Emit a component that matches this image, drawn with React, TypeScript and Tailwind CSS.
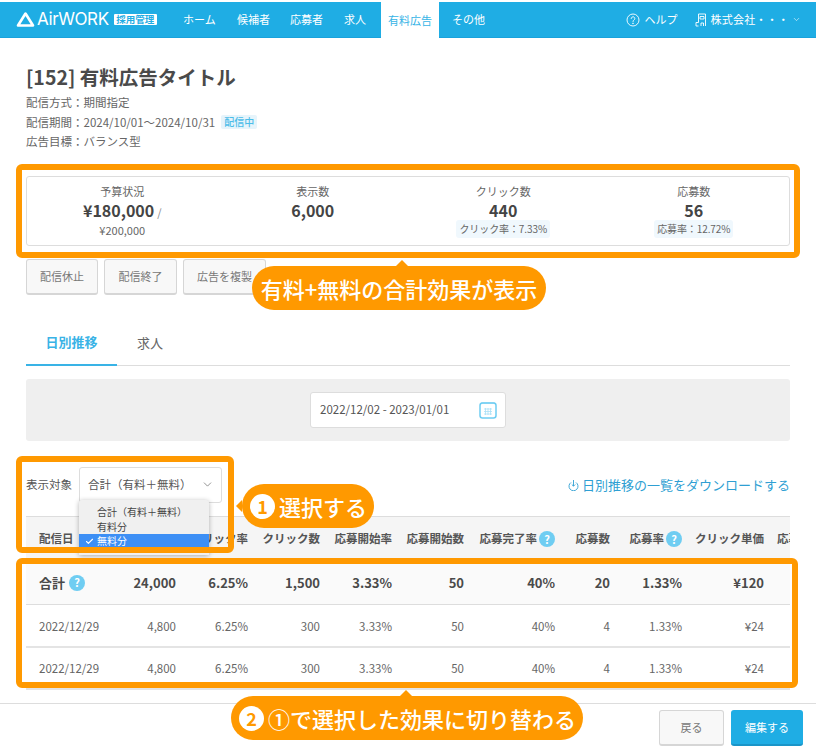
import React from "react";
import { ChevronDown, Check } from "lucide-react";

const columns = "grid grid-cols-[90px_60px_72px_72px_72px_72px_91px_55px_72px_82px_60px] items-center";

const headers = ["表示数", "クリック率", "クリック数", "応募開始率", "応募開始数", "応募完了率", "応募数", "応募率", "クリック単価"];
const headerHelp = ["応募完了率", "応募率"];

const rows = [
  ["2022/12/29", "4,800", "6.25%", "300", "3.33%", "50", "40%", "4", "1.33%", "¥24"],
  ["2022/12/29", "4,800", "6.25%", "300", "3.33%", "50", "40%", "4", "1.33%", "¥24"],
];
const total = ["24,000", "6.25%", "1,500", "3.33%", "50", "40%", "20", "1.33%", "¥120"];

function Help() {
  return (
    <span className="inline-flex items-center justify-center w-[16px] h-[16px] rounded-full bg-[#6fcdf2] text-white text-[11px] font-bold leading-none shrink-0">?</span>
  );
}

function Stat({ label, value, children }: { label: string; value: React.ReactNode; children?: React.ReactNode }) {
  return (
    <div className="flex flex-col items-center pt-[6px]">
      <div className="text-[11px] leading-[16px] text-[#666]">{label}</div>
      <div className="text-[16px] leading-[22px] font-bold text-[#444]">{value}</div>
      {children}
    </div>
  );
}

function Rate({ children }: { children: React.ReactNode }) {
  return <div className="-mt-[1px] px-[3px] h-[18px] flex items-center rounded-[3px] bg-[#f0f8fd] text-[10px] tracking-[-0.1px] text-[#666]">{children}</div>;
}

function OutlineButton({ children, className }: { children: React.ReactNode; className: string }) {
  return (
    <button className={`h-[36px] rounded-[3px] border border-[#d6d6d6] border-b-2 bg-[#f8f8f8] text-[11px] text-[#777] ${className}`}>{children}</button>
  );
}

function Num({ n }: { n: string }) {
  return <span className="w-[25px] h-[25px] rounded-full bg-white text-[#ff9900] text-[18px] font-bold leading-none flex items-center justify-center shrink-0">{n}</span>;
}

export default function App() {
  return (
    <div className="relative w-[816px] h-[752px] overflow-hidden bg-white flex flex-col text-[#555] font-['Noto_Sans_CJK_JP','Noto_Sans',sans-serif]">
      {/* header */}
      <header className="mt-[2px] h-[36px] shrink-0 bg-[#1fade4] border-b border-[#19a2dc] flex items-stretch text-white text-[11px]">
        <div className="flex items-center pl-[16px] w-[183px]">
          <svg width="19" height="17" viewBox="0 0 19 17" fill="none" stroke="white" strokeWidth="2.6" strokeLinejoin="round" className="mr-[2px]">
            <path d="M9.5 2.5 L17 14.5 H2 Z" />
          </svg>
          <span className="text-[17px] font-['Inter',sans-serif] font-normal leading-none tracking-[-0.4px]">AirWORK</span>
          <span className="ml-[5px] w-[43px] h-[11px] bg-white rounded-[1px] text-center text-[#1fade4] text-[9.5px] leading-[11px] font-bold">採用管理</span>
        </div>
        <nav className="flex items-stretch">
          <span className="flex items-center w-[54px]">ホーム</span>
          <span className="flex items-center w-[53px]">候補者</span>
          <span className="flex items-center w-[54px]">応募者</span>
          <span className="flex items-center w-[37px]">求人</span>
          <span className="flex items-center justify-center w-[58px] -mb-[1px] bg-white text-[#36b4e6]">有料広告</span>
          <span className="flex items-center pl-[13px]">その他</span>
        </nav>
        <div className="ml-auto flex items-center pr-[15px]">
          <svg width="14" height="14" viewBox="0 0 14 14" fill="none" stroke="white" strokeWidth="0.9" className="mr-[5px]">
            <circle cx="7" cy="7" r="6" />
            <path d="M5.2 5.5a1.8 1.8 0 1 1 2.7 1.6c-.6.4-.9.7-.9 1.4" strokeLinecap="round" />
            <circle cx="7" cy="10.3" r="0.4" />
          </svg>
          <span>ヘルプ</span>
          <svg width="12" height="14" viewBox="0 0 12 14" fill="none" stroke="white" strokeWidth="0.9" className="ml-[17px] mr-[4px]">
            <path d="M3.5 9.5V1h7v12M3.5 9.5H1V13h2.5M6 13v-3h2.5v3M5 3.5h4M5 6h4M5 3.5V6M9 3.5V6" />
          </svg>
          <span className="tracking-[0.2px]">株式会社・・・</span>
          <ChevronDown size={9} strokeWidth={1.5} className="ml-[3px]" />
        </div>
      </header>

      <main className="flex-1 px-[26px] min-h-0">
        <h1 className="mt-[25px] text-[19.5px] leading-[28px] font-bold text-[#4a4a4a]">[152] 有料広告タイトル</h1>
        <div className="mt-[2px] text-[11.5px] leading-[19.5px] text-[#666]">
          <div>配信方式：期間指定</div>
          <div className="flex items-center">
            配信期間：2024/10/01～2024/10/31
            <span className="ml-[6px] px-[3px] h-[14px] leading-[14px] rounded-[2px] bg-[#e6f4fb] text-[#4dbde9] text-[10px] font-medium">配信中</span>
          </div>
          <div>広告目標：バランス型</div>
        </div>

        {/* stats */}
        <section className="mt-[24px] h-[70px] border border-[#ddd] rounded-[3px] grid grid-cols-4">
          <Stat label="予算状況" value={<>¥180,000<span className="ml-[3px] text-[11px] font-normal text-[#888]">/</span></>}>
            <div className="-mt-[1px] text-[11px] leading-[16px] text-[#666]">¥200,000</div>
          </Stat>
          <Stat label="表示数" value="6,000" />
          <Stat label="クリック数" value="440"><Rate>クリック率：7.33%</Rate></Stat>
          <Stat label="応募数" value="56"><Rate>応募率：12.72%</Rate></Stat>
        </section>

        <div className="mt-[13px] flex gap-[6px]">
          <OutlineButton className="w-[72px]">配信休止</OutlineButton>
          <OutlineButton className="w-[73px]">配信終了</OutlineButton>
          <OutlineButton className="w-[83px]">広告を複製</OutlineButton>
        </div>

        {/* tabs */}
        <div className="mt-[30px] h-[41px] flex border-b border-[#ddd] text-[13px]">
          <div className="w-[91px] -mb-[1px] pb-[4px] flex items-center justify-center font-bold text-[#39b3e6] border-b-2 border-[#39b3e6]">日別推移</div>
          <div className="ml-[20px] pb-[4px] flex items-center text-[#666]">求人</div>
        </div>

        <div className="mt-[13px] h-[62px] rounded-[3px] bg-[#efefef] flex items-center justify-center">
          <div className="w-[196px] h-[36px] bg-white border border-[#ddd] rounded-[3px] flex items-center justify-between pl-[9px] pr-[8px] text-[11.5px] text-[#555]">
            <span>2022/12/02 - 2023/01/01</span>
            <svg width="18" height="18" viewBox="0 0 18 18" fill="none">
              <rect x="1" y="2" width="16" height="15" rx="2.5" stroke="#6fcdf2" strokeWidth="1.5" />
              <path d="M3 1v2M5 1v2M7 1v2M9 1v2M11 1v2M13 1v2M15 1v2" stroke="#6fcdf2" strokeWidth="0.8" />
              <path d="M5 8h8M5 10.5h8M5 13h8M6.5 7v7M9 7v7M11.5 7v7" stroke="#a9e0f6" strokeWidth="0.8" />
            </svg>
          </div>
        </div>

        {/* filter */}
        <div className="mt-[26px] h-[36px] flex items-center text-[11.5px]">
          <span className="w-[53px] text-[#555]">表示対象</span>
          <div className="w-[143px] h-[36px] border border-[#ddd] rounded-[3px] flex items-center justify-between pl-[8px] pr-[7px] text-[#555]">
            <span>合計（有料＋無料）</span>
            <ChevronDown size={13} strokeWidth={1.3} className="text-[#666]" />
          </div>
          <a className="ml-auto flex items-center text-[13px] text-[#2f9fd3]">
            <svg width="13" height="12" viewBox="0 0 13 12" fill="none" stroke="#2f9fd3" strokeWidth="0.9" className="mr-[2px]">
              <path d="M4 3.5a4.5 4.5 0 1 0 5 0M6.5 1v6M4.8 5.5 6.5 7.2 8.2 5.5" />
            </svg>
            日別推移の一覧をダウンロードする
          </a>
        </div>

        {/* table */}
        <div className="mt-[13px] border-t border-[#ddd] overflow-hidden">
          <div className={`${columns} h-[45px] bg-[#f5f5f5] text-[11.5px] font-bold text-[#555]`}>
            <span className="pl-[13px]">配信日</span>
            {headers.map((h) => (
              <span key={h} className="flex items-center justify-end gap-[2px] whitespace-nowrap">
                {h}
                {headerHelp.includes(h) && <Help />}
              </span>
            ))}
            <span className="pl-[13px] whitespace-nowrap">応募単価</span>
          </div>
          <div className={`${columns} h-[43px] bg-[#fafafa] border-b border-[#ddd] text-[13px] font-bold text-[#4a4a4a]`}>
            <span className="pl-[13px] flex items-center gap-[4px]">合計<Help /></span>
            {total.map((v, i) => (
              <span key={i} className="text-right">{v}</span>
            ))}
          </div>
          {rows.map((r, i) => (
            <div key={i} className={`${columns} ${i === 0 ? "h-[43px]" : "h-[42px]"} pt-[3px] border-b-2 border-[#e4e4e4] text-[11.5px] text-[#666]`}>
              {r.map((v, j) => (
                <span key={j} className={j === 0 ? "pl-[13px]" : "text-right"}>{v}</span>
              ))}
            </div>
          ))}
        </div>
      </main>

      <footer className="h-[49px] shrink-0 border-t border-[#ddd] flex items-center justify-end gap-[7px] pr-[13px]">
        <button className="w-[65px] h-[36px] rounded-[3px] border border-[#d6d6d6] border-b-2 bg-[#f8f8f8] text-[11px] text-[#777]">戻る</button>
        <button className="w-[72px] h-[36px] rounded-[3px] bg-[#1fade4] border-b-2 border-[#1a95c8] text-[11px] text-white">編集する</button>
      </footer>

      {/* dropdown */}
      <div className="absolute left-[79px] top-[500px] w-[130px] h-[55px] pt-[5px] bg-[#f0f0f0] rounded-t-[3px] shadow-[0_1px_5px_rgba(0,0,0,0.3)] text-[10px] leading-[14.5px] text-[#444]">
        <div className="pl-[18px]">合計（有料＋無料）</div>
        <div className="pl-[18px]">有料分</div>
        <div className="pl-[18px] relative bg-[#3d8ff5] text-white">
          <Check size={9} strokeWidth={3} className="absolute left-[6px] top-[3px]" />
          無料分
        </div>
      </div>

      {/* annotations */}
      <div className="absolute left-[16px] top-[164px] w-[784px] h-[94px] border-[6px] border-[#ff9900] rounded-[6px]" />
      <div className="absolute left-[16px] top-[456px] w-[218px] h-[97px] border-[6px] border-[#ff9900] rounded-[6px]" />
      <div className="absolute left-[16px] top-[558px] w-[782px] h-[130px] border-[6px] border-[#ff9900] rounded-[6px]" />

      <div className="absolute left-[252px] top-[266px] w-[294px] h-[44px] rounded-[22px] bg-[#ff9900] flex items-center justify-center text-white text-[22px] font-medium whitespace-nowrap">
        <span className="absolute left-[144px] -top-[6px] w-0 h-0 border-x-[6px] border-x-transparent border-b-[6px] border-b-[#ff9900]" />
        有料+無料の合計効果が表示
      </div>
      <div className="absolute left-[242px] top-[484px] w-[132px] h-[44px] rounded-[22px] bg-[#ff9900] flex items-center pl-[8px] gap-[4px] text-white text-[22px] font-medium whitespace-nowrap">
        <span className="absolute -left-[6px] top-[16px] w-0 h-0 border-y-[6px] border-y-transparent border-r-[6px] border-r-[#ff9900]" />
        <Num n="1" />
        選択する
      </div>
      <div className="absolute left-[231px] top-[696px] w-[352px] h-[44px] rounded-[22px] bg-[#ff9900] flex items-center pl-[8px] gap-[4px] text-white text-[22px] font-medium whitespace-nowrap">
        <span className="absolute left-[169px] -top-[6px] w-0 h-0 border-x-[6px] border-x-transparent border-b-[6px] border-b-[#ff9900]" />
        <Num n="2" />
        ①で選択した効果に切り替わる
      </div>
    </div>
  );
}
